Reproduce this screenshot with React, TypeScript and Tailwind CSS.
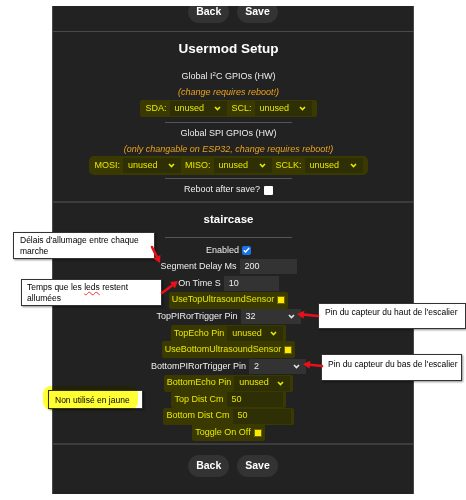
import React from "react";

type Kids = { children?: React.ReactNode };

function Chevron({ hl }: { hl?: boolean }) {
  return (
    <svg width="7" height="5" viewBox="0 0 7 5" className={hl ? "text-[#e8e800]" : "text-[#e6e6e6]"}>
      <path d="M1 1l2.5 2.5L6 1" fill="none" stroke="currentColor" strokeWidth="1.6" />
    </svg>
  );
}

function Select({ value, w, hl }: { value: string; w: string; hl?: boolean }) {
  return (
    <span
      className={`flex h-[15px] items-center justify-between pl-[5px] pr-[6px] ${w} ${
        hl ? "bg-[#2f2f05] text-[#e8e800]" : "bg-[#333] text-[#eee]"
      }`}
    >
      <span>{value}</span>
      <Chevron hl={hl} />
    </span>
  );
}

function Input({ value, w, hl }: { value: string; w: string; hl?: boolean }) {
  return (
    <span
      className={`flex h-[15px] items-center pl-[5px] ${w} ${
        hl ? "bg-[#2f2f05] text-[#e8e800]" : "bg-[#333] text-[#eee]"
      }`}
    >
      {value}
    </span>
  );
}

function YellowBox() {
  return <span className="block h-[8px] w-[8px] border border-[#6b6b00] bg-[#ffe900]" />;
}

function BlueBox() {
  return (
    <span className="flex h-[9px] w-[9px] items-center justify-center rounded-[2px] bg-[#1a73e8]">
      <svg width="7" height="6" viewBox="0 0 7 6">
        <path d="M0.8 3.2l1.7 1.7L6.2 0.9" fill="none" stroke="white" strokeWidth="1.4" />
      </svg>
    </span>
  );
}

function Row({ label, hl, children }: { label: string; hl?: boolean } & Kids) {
  return (
    <div className="flex h-[16.6px] items-center justify-center">
      <div
        className={`flex items-center gap-[3px] ${
          hl ? "h-[17px] rounded-[2px] bg-[#3a3a00] px-[3px] text-[#e8e800]" : "text-[#eee]"
        }`}
      >
        <span>{label}</span>
        {children}
      </div>
    </div>
  );
}

function Buttons() {
  return (
    <div className="flex justify-center gap-[8px]">
      <span className="flex h-[22px] items-center rounded-full bg-[#333] px-[8px] text-[10.5px] font-bold text-white">
        Back
      </span>
      <span className="flex h-[22px] items-center rounded-full bg-[#333] px-[8px] text-[10.5px] font-bold text-white">
        Save
      </span>
    </div>
  );
}

function Arrow({ x1, y1, x2, y2 }: { x1: number; y1: number; x2: number; y2: number }) {
  const a = Math.atan2(y2 - y1, x2 - x1);
  const L = 7;
  const W = 4;
  const bx = x2 - L * Math.cos(a);
  const by = y2 - L * Math.sin(a);
  const p1 = `${bx + W * Math.sin(a)},${by - W * Math.cos(a)}`;
  const p2 = `${bx - W * Math.sin(a)},${by + W * Math.cos(a)}`;
  return (
    <g>
      <line x1={x1} y1={y1} x2={bx} y2={by} stroke="#e8101a" strokeWidth={2.6} strokeLinecap="round" />
      <polygon points={`${x2},${y2} ${p1} ${p2}`} fill="#e8101a" />
    </g>
  );
}

const note =
  "absolute border border-[#333] bg-white text-[8.5px] leading-[11px] text-black shadow-[1px_1px_2px_rgba(0,0,0,0.45)]";

export default function App() {
  return (
    <div className="relative h-[500px] w-[466px] overflow-hidden bg-white font-['Liberation_Sans',Arial,sans-serif] text-[9px]">
      <div className="mx-auto mt-[6px] w-[362px] overflow-hidden border-x border-[#4a4a4a] bg-[#222]">
        {/* top buttons, cut by the page edge */}
        <div className="flex h-[25px] items-end justify-center pb-[8px]">
          <Buttons />
        </div>
        <div className="border-t border-[#4a4a4a]" />

        <div className="pr-[9px] text-center">
          <div className="flex h-[34px] items-center justify-center text-[13.5px] font-bold text-white">
            Usermod Setup
          </div>
          <div className="mt-[3px] flex h-[16px] items-center justify-center text-[#eee]">
            Global I<sup className="text-[6px]">2</sup>C GPIOs (HW)
          </div>
          <div className="flex h-[15px] items-center justify-center italic text-[#eba31a]">
            (change requires reboot!)
          </div>
          <div className="flex h-[17px] items-center justify-center">
            <div className="flex h-[17px] items-center gap-[3px] rounded-[2px] bg-[#3a3a00] px-[5px] text-[#e8e800]">
              <span>SDA:</span>
              <Select value="unused" w="w-[57px]" hl />
              <span className="ml-[2px]">SCL:</span>
              <Select value="unused" w="w-[57px]" hl />
            </div>
          </div>
          <div className="mx-auto mt-[5px] w-[127px] border-t border-[#555]" />
          <div className="mt-[3px] flex h-[16px] items-center justify-center text-[#eee]">
            Global SPI GPIOs (HW)
          </div>
          <div className="flex h-[15px] items-center justify-center italic text-[#eba31a]">
            (only changable on ESP32, change requires reboot!)
          </div>
          <div className="flex h-[17px] items-center justify-center">
            <div className="flex h-[19px] items-center gap-[3px] rounded-[5px] bg-[#3a3a00] px-[5px] text-[#e8e800]">
              <span>MOSI:</span>
              <Select value="unused" w="w-[58px]" hl />
              <span className="ml-[1px]">MISO:</span>
              <Select value="unused" w="w-[58px]" hl />
              <span className="ml-[1px]">SCLK:</span>
              <Select value="unused" w="w-[58px]" hl />
            </div>
          </div>
          <div className="mx-auto mt-[4px] w-[127px] border-t border-[#555]" />
          <div className="mt-[3px] flex h-[16px] items-center justify-center gap-[4px] text-[#eee]">
            <span>Reboot after save?</span>
            <span className="block h-[9px] w-[9px] rounded-[1px] bg-white" />
          </div>
        </div>

        <div className="mt-[3px] border-t-2 border-[#3c3c3c]" />

        <div className="pr-[9px]">
          <div className="mt-[8px] flex h-[18px] items-center justify-center text-[11.5px] font-bold text-white">
            staircase
          </div>
          <div className="mx-auto mt-[8px] w-[127px] border-t border-[#555]" />
          <div className="mt-[4px]">
            <Row label="Enabled">
              <BlueBox />
            </Row>
            <Row label="Segment Delay Ms">
              <Input value="200" w="w-[57px]" />
            </Row>
            <Row label="On Time S">
              <Input value="10" w="w-[55px]" />
            </Row>
            <Row label="UseTopUltrasoundSensor" hl>
              <YellowBox />
            </Row>
            <Row label="TopPIRorTrigger Pin">
              <Select value="32" w="w-[60px]" />
            </Row>
            <Row label="TopEcho Pin" hl>
              <Select value="unused" w="w-[56px]" hl />
            </Row>
            <Row label="UseBottomUltrasoundSensor" hl>
              <YellowBox />
            </Row>
            <Row label="BottomPIRorTrigger Pin">
              <Select value="2" w="w-[57px]" />
            </Row>
            <Row label="BottomEcho Pin" hl>
              <Select value="unused" w="w-[56px]" hl />
            </Row>
            <Row label="Top Dist Cm" hl>
              <Input value="50" w="w-[56px]" hl />
            </Row>
            <Row label="Bottom Dist Cm" hl>
              <Input value="50" w="w-[58px]" hl />
            </Row>
            <Row label="Toggle On Off" hl>
              <YellowBox />
            </Row>
          </div>
        </div>

        <div className="mt-[2px] border-t-2 border-[#3c3c3c]" />
        <div className="mt-[10px] pb-[17px]">
          <Buttons />
        </div>
      </div>

      {/* annotations laid over the screenshot */}
      <div className={`${note} left-[13px] top-[232px] h-[27px] w-[142px] px-[6px] pt-[2px]`}>
        Délais d'allumage entre chaque marche
      </div>
      <div className={`${note} left-[21px] top-[279px] h-[27px] w-[141px] px-[5px] pt-[2px]`}>
        <div>
          Temps que les <span className="underline decoration-red-500 decoration-wavy underline-offset-1">leds</span>{" "}
          restent
        </div>
        <div>allumées</div>
      </div>
      <div className={`${note} left-[318px] top-[303px] h-[26px] w-[148px] whitespace-nowrap px-[6px] pt-[3px]`}>
        Pin du capteur du haut de l'escalier
      </div>
      <div className={`${note} left-[321px] top-[354px] h-[27px] w-[141px] whitespace-nowrap px-[6px] pt-[4px]`}>
        Pin du capteur du bas de l'escalier
      </div>
      <div className={`${note} left-[48px] top-[390px] h-[19px] w-[95px] whitespace-nowrap px-[6px] pt-[4px]`}>
        Non utilisé en jaune
      </div>
      <div className="pointer-events-none absolute left-[43px] top-[386px] h-[24px] w-[95px] rounded-[8px] bg-[#ffff00]/80 mix-blend-multiply" />

      <svg className="pointer-events-none absolute left-0 top-0" width="466" height="500">
        <Arrow x1={152} y1={247} x2={160} y2={263} />
        <Arrow x1={162} y1={293} x2={178} y2={281} />
        <Arrow x1={318} y1={316} x2={297} y2={314} />
        <Arrow x1={322} y1={366} x2={303} y2={364} />
      </svg>
    </div>
  );
}
